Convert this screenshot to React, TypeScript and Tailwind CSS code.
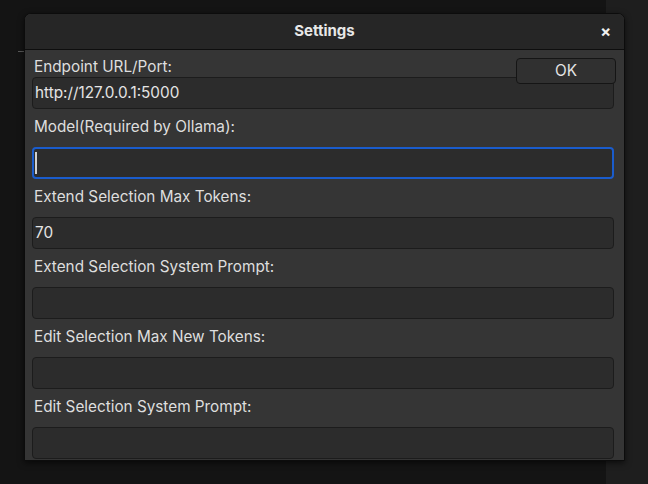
import { useState } from 'react';

const fields = [
  { label: 'Model(Required by Ollama):', value: '', focus: true },
  { label: 'Extend Selection Max Tokens:', value: '70' },
  { label: 'Extend Selection System Prompt:', value: '' },
  { label: 'Edit Selection Max New Tokens:', value: '' },
  { label: 'Edit Selection System Prompt:', value: '' },
];

const Field = ({ label, value, focus }: { label: string; value: string; focus?: boolean }) => (
  <div className='flex flex-col'>
    <label className='mt-[7px] mb-[10px] ml-[2px] h-[21px] leading-[21px] text-[15.3px] text-[#dedede]'>{label}</label>
    <div
      className={
        focus
          ? 'h-[32px] rounded-[4px] border-2 border-[#1a5ccc] bg-[#2c2c2c] flex items-center pl-[1px]'
          : 'h-[32px] rounded-[4px] border border-[#1c1c1c] bg-[#2c2c2c] flex items-center pl-[2px]'
      }
    >
      {focus ? <span className='block w-[2px] h-[22px] bg-[#d0d0d0]' /> : <span className='text-[15.3px] text-[#e4e4e4]'>{value}</span>}
    </div>
  </div>
);

const App = () => {
  const [url] = useState('http://127.0.0.1:5000');
  return (
    <div className='w-[648px] h-[484px] bg-[#141414] flex relative overflow-hidden' style={{ fontFamily: 'Inter, "Noto Sans", sans-serif' }}>
      <div className='absolute left-[18px] top-[51px] w-[6px] h-[1px] bg-[#5a5a5a]' />
      <div className='absolute left-[606px] top-0 bottom-0 right-0 bg-[#1e1e1e]' />
      <div className='absolute left-[24px] top-[13px] w-[601px] h-[448px] rounded-t-[7px] border border-[#0c0c0c] bg-[#353535] overflow-hidden flex flex-col shadow-[0_2px_6px_rgba(0,0,0,0.6)]'>
        <div className='h-[36px] shrink-0 bg-[#262626] border-b border-[#0e0e0e] flex items-center justify-center relative'>
          <span className='text-[15px] font-bold text-[#e8e8e8]'>Settings</span>
          <span className='absolute right-[13px] top-[9px] text-[16px] leading-[16px] font-bold text-[#f0f0f0]'>×</span>
        </div>
        <div className='pl-[7px] pr-[10px] flex flex-col relative'>
          <label className='mt-[7px] ml-[2px] h-[20px] leading-[20px] text-[15.3px] text-[#dedede]'>Endpoint URL/Port:</label>
          <div className='h-[32px] rounded-[4px] border border-[#1c1c1c] bg-[#2c2c2c] flex items-center pl-[2px]'>
            <span className='text-[15.3px] text-[#e4e4e4]'>{url}</span>
          </div>
          <button className='absolute right-[8px] top-[8px] w-[100px] h-[26px] rounded-[4px] border border-[#151515] bg-[#303030] text-[15.3px] text-[#e4e4e4]'>OK</button>
          {fields.map((f) => (
            <Field key={f.label} label={f.label} value={f.value} focus={f.focus} />
          ))}
        </div>
      </div>
    </div>
  );
};

export default App;
